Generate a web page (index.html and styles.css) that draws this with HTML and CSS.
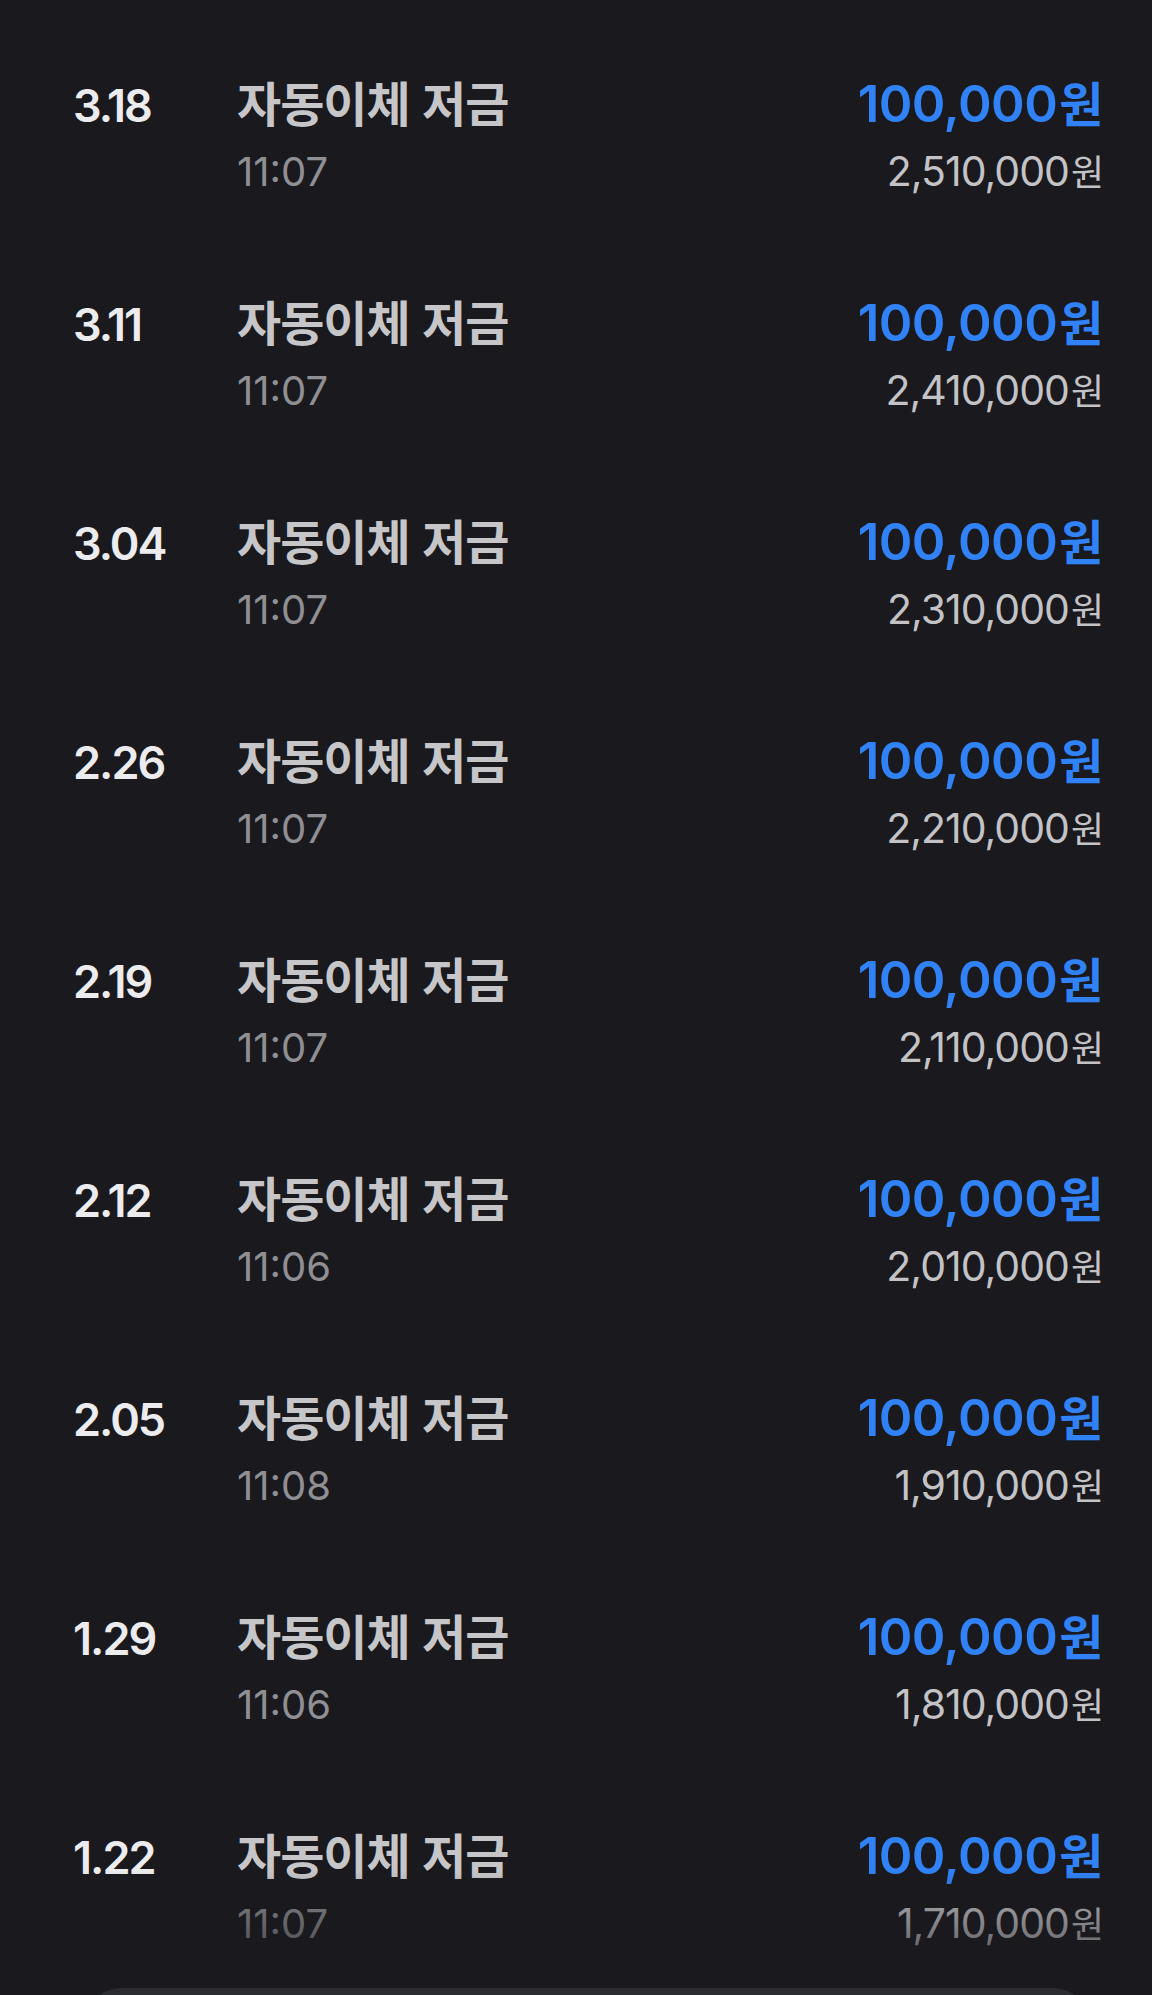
FILE: index.html
```html
<!DOCTYPE html>
<html lang="ko">

<head>
    <meta charset="UTF-8">
    <meta name="viewport" content="width=device-width, initial-scale=1.0">
    <title>거래내역</title>
    <link rel="stylesheet" href="styles.css">
</head>

<body>
    <div class="screen">
        <ul class="history">
            <li class="item">
                <div class="date">3.18</div>
                <div class="info">
                    <div class="title">자동이체 저금</div>
                    <div class="time">11:07</div>
                </div>
                <div class="amounts">
                    <div class="amount">100,000<span class="won">원</span></div>
                    <div class="balance">2,510,000<span class="won">원</span></div>
                </div>
            </li>
            <li class="item">
                <div class="date">3.11</div>
                <div class="info">
                    <div class="title">자동이체 저금</div>
                    <div class="time">11:07</div>
                </div>
                <div class="amounts">
                    <div class="amount">100,000<span class="won">원</span></div>
                    <div class="balance">2,410,000<span class="won">원</span></div>
                </div>
            </li>
            <li class="item">
                <div class="date">3.04</div>
                <div class="info">
                    <div class="title">자동이체 저금</div>
                    <div class="time">11:07</div>
                </div>
                <div class="amounts">
                    <div class="amount">100,000<span class="won">원</span></div>
                    <div class="balance">2,310,000<span class="won">원</span></div>
                </div>
            </li>
            <li class="item">
                <div class="date">2.26</div>
                <div class="info">
                    <div class="title">자동이체 저금</div>
                    <div class="time">11:07</div>
                </div>
                <div class="amounts">
                    <div class="amount">100,000<span class="won">원</span></div>
                    <div class="balance">2,210,000<span class="won">원</span></div>
                </div>
            </li>
            <li class="item">
                <div class="date">2.19</div>
                <div class="info">
                    <div class="title">자동이체 저금</div>
                    <div class="time">11:07</div>
                </div>
                <div class="amounts">
                    <div class="amount">100,000<span class="won">원</span></div>
                    <div class="balance">2,110,000<span class="won">원</span></div>
                </div>
            </li>
            <li class="item">
                <div class="date">2.12</div>
                <div class="info">
                    <div class="title">자동이체 저금</div>
                    <div class="time">11:06</div>
                </div>
                <div class="amounts">
                    <div class="amount">100,000<span class="won">원</span></div>
                    <div class="balance">2,010,000<span class="won">원</span></div>
                </div>
            </li>
            <li class="item">
                <div class="date">2.05</div>
                <div class="info">
                    <div class="title">자동이체 저금</div>
                    <div class="time">11:08</div>
                </div>
                <div class="amounts">
                    <div class="amount">100,000<span class="won">원</span></div>
                    <div class="balance">1,910,000<span class="won">원</span></div>
                </div>
            </li>
            <li class="item">
                <div class="date">1.29</div>
                <div class="info">
                    <div class="title">자동이체 저금</div>
                    <div class="time">11:06</div>
                </div>
                <div class="amounts">
                    <div class="amount">100,000<span class="won">원</span></div>
                    <div class="balance">1,810,000<span class="won">원</span></div>
                </div>
            </li>
            <li class="item">
                <div class="date">1.22</div>
                <div class="info">
                    <div class="title">자동이체 저금</div>
                    <div class="time">11:07</div>
                </div>
                <div class="amounts">
                    <div class="amount">100,000<span class="won">원</span></div>
                    <div class="balance">1,710,000<span class="won">원</span></div>
                </div>
            </li>
        </ul>

        <div class="fade"></div>
        <div class="bottom-sheet"></div>
    </div>
</body>

</html>
```

FILE: styles.css
```css
html,
body {
    margin: 0;
    padding: 0;
    background-color: #19191e;
}

body {
    font-family: Inter, 'Noto Sans CJK KR', sans-serif;
    color: #e9e9eb;
}

.screen {
    position: relative;
    height: 1995px;
    overflow: hidden;
}

.history {
    list-style: none;
    margin: 0;
    padding: 0;
}

.item {
    display: flex;
    align-items: baseline;
    height: 219px;
    box-sizing: border-box;
    padding: 70px 49px 0 73px;
}

.date {
    width: 164px;
    flex-shrink: 0;
    font-size: 45px;
    font-weight: 600;
    line-height: 62px;
    letter-spacing: -2px;
    color: #ececee;
}

.info {
    flex-grow: 1;
}

.title {
    font-family: 'Noto Sans CJK KR', sans-serif;
    font-size: 48px;
    font-weight: 700;
    line-height: 62px;
    letter-spacing: -1px;
    color: #c6c6c9;
}

.time {
    margin-top: 9px;
    font-size: 40px;
    line-height: 62px;
    color: #8f8f94;
}

.amounts {
    text-align: right;
}

.amount {
    font-size: 51px;
    font-weight: 600;
    line-height: 62px;
    letter-spacing: -0.5px;
    color: #3182f6;
}

.amount .won {
    font-family: 'Noto Sans CJK KR', sans-serif;
    font-size: 48px;
    font-weight: 700;
    margin-left: 2px;
}

.balance {
    margin-top: 4px;
    font-size: 41px;
    line-height: 62px;
    letter-spacing: -1px;
    color: #c3c3c6;
}

.balance .won {
    font-family: 'Noto Sans CJK KR', sans-serif;
    font-size: 36px;
    margin-left: 2px;
}

/* the list fades out under the floating sheet */
.fade {
    position: absolute;
    left: 0;
    right: 0;
    bottom: 0;
    height: 125px;
    background: linear-gradient(rgba(25, 25, 30, 0), rgba(25, 25, 30, 0.85));
}

.bottom-sheet {
    position: absolute;
    left: 82px;
    right: 60px;
    top: 1988px;
    height: 120px;
    border-radius: 40px;
    background-color: #2b2b32;
}
```
